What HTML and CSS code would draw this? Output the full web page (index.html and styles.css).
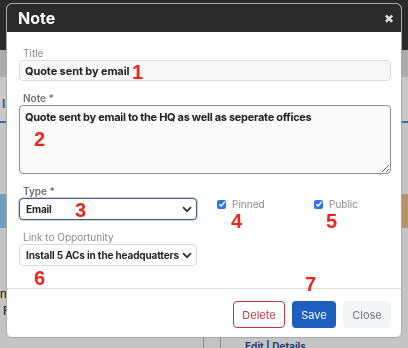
FILE: index.html
```html
<!DOCTYPE html>
<html lang="en">
<head>
    <meta charset="UTF-8">
    <meta name="viewport" content="width=device-width, initial-scale=1.0">
    <title>Note</title>
    <link rel="stylesheet" href="styles.css">
</head>
<body>
    <div class="page">
        <div class="topbar"></div>
        <div class="subbar"></div>
        <div class="tabs">
            <span class="tab-link">I</span>
        </div>
        <div class="content">
            <div class="band">
                <div class="band-left"></div>
                <div class="band-right"></div>
            </div>
            <div class="rows">
                <span class="row-text">n</span>
                <span class="row-text indent">F</span>
            </div>
            <div class="bottom-row">
                <div class="cell-line"></div>
                <div class="cell-line"></div>
                <span class="links">Edit | Details</span>
            </div>
        </div>
    </div>

    <div class="modal">
        <div class="modal-header">
            <h2>Note</h2>
            <span class="close-x">&#x2716;</span>
        </div>

        <form class="modal-body">
            <div class="form-group">
                <label for="title">Title</label>
                <input type="text" id="title" class="field" value="Quote sent by email">
            </div>

            <div class="form-group">
                <label for="note" class="strong">Note *</label>
                <textarea id="note" class="field note-area">Quote sent by email to the HQ as well as seperate offices</textarea>
            </div>

            <div class="type-row">
                <div class="form-group type-group">
                    <label for="type" class="strong">Type *</label>
                    <div class="select focused">
                        <span>Email</span>
                        <svg class="chev" width="10" height="7" viewBox="0 0 10 7"><path d="M1 1.2 5 5.2 9 1.2" fill="none" stroke="#333" stroke-width="1.8"/></svg>
                    </div>
                </div>
                <div class="checks">
                    <label class="check"><span class="box"><svg width="8" height="8" viewBox="0 0 8 8"><path d="M1.3 4.2 3.2 6 6.8 1.8" fill="none" stroke="#fff" stroke-width="1.5"/></svg></span>Pinned</label>
                    <label class="check"><span class="box"><svg width="8" height="8" viewBox="0 0 8 8"><path d="M1.3 4.2 3.2 6 6.8 1.8" fill="none" stroke="#fff" stroke-width="1.5"/></svg></span>Public</label>
                </div>
            </div>

            <div class="form-group type-group">
                <label>Link to Opportunity</label>
                <div class="select">
                    <span>Install 5 ACs in the headquatters</span>
                    <svg class="chev" width="10" height="7" viewBox="0 0 10 7"><path d="M1 1.2 5 5.2 9 1.2" fill="none" stroke="#333" stroke-width="1.8"/></svg>
                </div>
            </div>
        </form>

        <div class="modal-footer">
            <button type="button" class="btn btn-delete">Delete</button>
            <button type="button" class="btn btn-save">Save</button>
            <button type="button" class="btn btn-close">Close</button>
        </div>

        <span class="mark m1">1</span>
        <span class="mark m2">2</span>
        <span class="mark m3">3</span>
        <span class="mark m4">4</span>
        <span class="mark m5">5</span>
        <span class="mark m6">6</span>
        <span class="mark m7">7</span>
    </div>
</body>
</html>
```

FILE: styles.css
```css
body {
    margin: 0;
    font-family: 'Inter', 'Liberation Sans', sans-serif;
    background-color: #c2c2c2;
    width: 408px;
    height: 348px;
    overflow: hidden;
}

/* dimmed page behind the dialog */
.page {
    display: flex;
    flex-direction: column;
    height: 348px;
}
.topbar {
    height: 50px;
    background-color: #2b2b2b;
}
.subbar {
    height: 27px;
    background-color: #ababab;
}
.tabs {
    height: 46px;
    background-color: #c8c8c8;
    border-bottom: 2px solid #3a6bb0;
    padding-top: 21px;
    box-sizing: border-box;
}
.tab-link {
    display: block;
    margin-left: 2px;
    color: #2d5f9e;
    font-weight: bold;
    font-size: 12px;
    line-height: 12px;
}
.content {
    flex: 1;
    display: flex;
    flex-direction: column;
    background-color: #c4c4c4;
    padding-top: 71px;
}
.band {
    display: flex;
    justify-content: space-between;
    height: 34px;
}
.band-left {
    width: 20px;
    background-color: #6e9fc1;
}
.band-right {
    width: 10px;
    background-color: #b8926a;
}
.rows {
    display: flex;
    flex-direction: column;
    padding-top: 58px;
    font-family: 'Liberation Sans', sans-serif;
    font-size: 12px;
    line-height: 17px;
    color: #111;
}
.row-text {
    padding-left: 0;
}
.row-text.indent {
    padding-left: 3px;
}
.bottom-row {
    display: flex;
    align-items: flex-end;
    flex: 1;
    padding-left: 203px;
}
.cell-line {
    width: 16px;
    height: 14px;
    border-left: 1px solid #8a8a8a;
}
.links {
    margin-left: 8px;
    font-size: 10px;
    font-weight: bold;
    color: #1f3f78;
    line-height: 10px;
    margin-bottom: -3px;
}

/* dialog */
.modal {
    position: fixed;
    top: 3px;
    left: 6px;
    width: 396px;
    box-sizing: border-box;
    background-color: #fff;
    border: 1px solid #a9a9a9;
    border-radius: 6px;
    overflow: hidden;
}
.modal-header {
    display: flex;
    justify-content: space-between;
    align-items: center;
    height: 28px;
    background-color: #2b2b2b;
    padding: 0 7px 0 11px;
}
.modal-header h2 {
    margin: 0;
    color: #fff;
    font-size: 16px;
    font-weight: 700;
}
.close-x {
    color: #dcdcdc;
    font-size: 12px;
    font-family: 'DejaVu Sans', sans-serif;
    margin-top: 1px;
}
.modal-body {
    display: flex;
    flex-direction: column;
    gap: 10px;
    padding: 14px 10px 22px 12px;
    margin: 0;
}
.form-group {
    display: flex;
    flex-direction: column;
}
label {
    display: block;
    font-size: 10px;
    line-height: 14px;
    color: #8c8c8c;
    padding-left: 4px;
}
label.strong {
    font-weight: 600;
    color: #6f6f6f;
}
.field {
    width: 100%;
    box-sizing: border-box;
    font-family: 'Inter', 'Liberation Sans', sans-serif;
    font-size: 11px;
    font-weight: 700;
    color: #222;
    background-color: #f8f8f8;
    border: 1px solid #dcdcdc;
    border-radius: 4px;
    height: 21px;
    padding: 0 5px;
    margin: 0;
    outline: none;
    letter-spacing: -0.1px;
}
.note-area {
    height: 69px;
    padding: 4px 5px;
    border-color: #8e8e8e;
    background-color: #fafafa;
    resize: vertical;
    line-height: 14px;
    letter-spacing: -0.3px;
}
.type-row {
    display: flex;
}
.type-group {
    width: 178px;
    flex-shrink: 0;
}
.select {
    display: flex;
    justify-content: space-between;
    align-items: center;
    height: 22px;
    box-sizing: border-box;
    border: 1px solid #dadada;
    border-radius: 4px;
    padding: 0 4px 0 6px;
    font-size: 10px;
    font-weight: 700;
    color: #262626;
    background-color: #fff;
    white-space: nowrap;
}
.select span {
    letter-spacing: -0.15px;
}
.select.focused {
    border-color: #4a5a70;
    box-shadow: 0 0 0 1px #c5d4ea;
}
.checks {
    display: grid;
    grid-template-columns: 97px 80px;
    padding: 15px 0 0 20px;
    align-items: start;
}
.check {
    display: flex;
    align-items: center;
    gap: 6px;
    padding: 0;
    font-size: 10px;
    line-height: 10px;
    color: #8c8c8c;
}
.box {
    display: flex;
    align-items: center;
    justify-content: center;
    width: 9px;
    height: 9px;
    border-radius: 2px;
    background-color: #2f74e6;
}

.modal-footer {
    display: flex;
    justify-content: flex-end;
    gap: 7px;
    border-top: 1px solid #dde2e8;
    padding: 12px 10px 9px 0;
}
.btn {
    height: 27px;
    border-radius: 4px;
    font-family: 'Inter', 'Liberation Sans', sans-serif;
    font-size: 11px;
    border: 1px solid transparent;
    padding: 0;
}
.btn-delete {
    width: 52px;
    background-color: #fff;
    border-color: #c8363d;
    color: #c8363d;
}
.btn-save {
    width: 44px;
    background-color: #1d5fbf;
    color: #fff;
}
.btn-close {
    width: 48px;
    background-color: #f3f4f6;
    color: #777;
}

/* red annotation numbers */
.mark {
    position: absolute;
    font-family: 'Liberation Sans', sans-serif;
    font-weight: bold;
    font-size: 20px;
    line-height: 20px;
    color: #f0241b;
}
.m1 { left: 125px; top: 58px; }
.m2 { left: 27px; top: 125px; }
.m3 { left: 68px; top: 196px; }
.m4 { left: 224px; top: 207px; }
.m5 { left: 319px; top: 207px; }
.m6 { left: 27px; top: 264px; }
.m7 { left: 298px; top: 270px; }
```
